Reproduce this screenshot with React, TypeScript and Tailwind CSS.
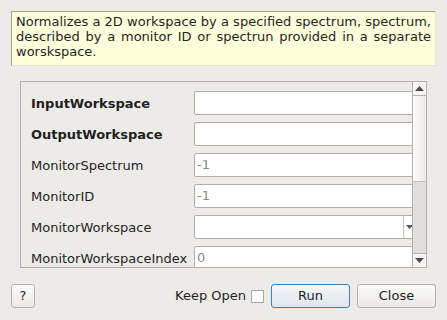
const ROWS: { label: string; bold?: boolean; value?: string; combo?: boolean }[] = [
  { label: "InputWorkspace", bold: true },
  { label: "OutputWorkspace", bold: true },
  { label: "MonitorSpectrum", value: "-1" },
  { label: "MonitorID", value: "-1" },
  { label: "MonitorWorkspace", combo: true },
  { label: "MonitorWorkspaceIndex", value: "0" },
];

function Arrow({ up }: { up?: boolean }) {
  return (
    <svg width="9" height="5" viewBox="0 0 9 5">
      <path d={up ? "M0 5 L4.5 0 L9 5 Z" : "M0 0 L4.5 5 L9 0 Z"} fill="#4a4a4a" />
    </svg>
  );
}

export default function App() {
  return (
    <div
      className="flex h-[320px] w-[447px] flex-col overflow-hidden bg-[#edebe8] text-[13px] text-[#1f1f1f]"
      style={{ fontFamily: '"DejaVu Sans", sans-serif' }}
    >
      <div className="mx-[11px] mt-[11px] h-[55px] border-t border-l border-[#a3a29c] border-r border-b border-r-[#e6e6d2] border-b-[#e6e6d2] bg-[#ffffdc] px-[4px] pt-[2px] leading-[15px] text-justify">
        Normalizes a 2D workspace by a specified spectrum, spectrum, described by a monitor ID or spectrun provided in a separate worskspace.
      </div>

      <div className="ml-[20px] mt-[15px] flex h-[187px] w-[407px] border border-[#b4b0ab]">
        <div className="flex flex-1 flex-col gap-[7px] overflow-hidden pl-[10px] pt-[9px]">
          {ROWS.map((row) => (
            <div key={row.label} className="flex h-[24px] shrink-0 items-center">
              <div className={`w-[163px] shrink-0 pt-[1px] ${row.bold ? "font-bold" : ""}`}>{row.label}</div>
              <div className="flex h-[24px] w-[240px] shrink-0 items-center rounded-[2px] border border-[#b0ada9] bg-white pl-[2px] text-[#8c8c8c]">
                <span className="flex-1">{row.value}</span>
                {row.combo && (
                  <div className="ml-auto mr-[18px] flex h-full w-[12px] items-center justify-center border-l border-[#c8c6c2]">
                    <svg width="7" height="4" viewBox="0 0 7 4">
                      <path d="M0 0 L3.5 4 L7 0 Z" fill="#555" />
                    </svg>
                  </div>
                )}
              </div>
            </div>
          ))}
        </div>
        <div className="flex w-[14px] shrink-0 flex-col border-l border-[#b4b0ab] bg-[#e1dfdc]">
          <div className="flex h-[14px] items-center justify-center border-b border-[#b4b0ab] bg-[#f6f5f3]">
            <Arrow up />
          </div>
          <div className="h-[86px] border-b border-[#c2beb9] bg-gradient-to-r from-[#fdfdfc] to-[#ebe9e6]" />
          <div className="flex-1" />
          <div className="flex h-[14px] items-center justify-center border-t border-[#b4b0ab] bg-[#f6f5f3]">
            <Arrow />
          </div>
        </div>
      </div>

      <div className="mt-[16px] flex h-[24px] items-center px-[11px]">
        <button className="h-[24px] w-[24px] rounded-[3px] border border-[#b5b2ae] bg-gradient-to-b from-[#fbfbfa] to-[#ebe9e6] text-[13px]">
          ?
        </button>
        <span className="ml-auto">Keep Open</span>
        <span className="ml-[5px] h-[13px] w-[13px] border border-[#aaa7a3] bg-white" />
        <button className="ml-[7px] h-[24px] w-[79px] rounded-[3px] border border-[#3f7fc1] bg-gradient-to-b from-[#f5f7f9] to-[#dfe5eb] text-[13px]">
          Run
        </button>
        <button className="ml-[7px] h-[24px] w-[79px] rounded-[3px] border border-[#b5b2ae] bg-gradient-to-b from-[#fbfbfa] to-[#ebe9e6] text-[13px]">
          Close
        </button>
      </div>
    </div>
  );
}
